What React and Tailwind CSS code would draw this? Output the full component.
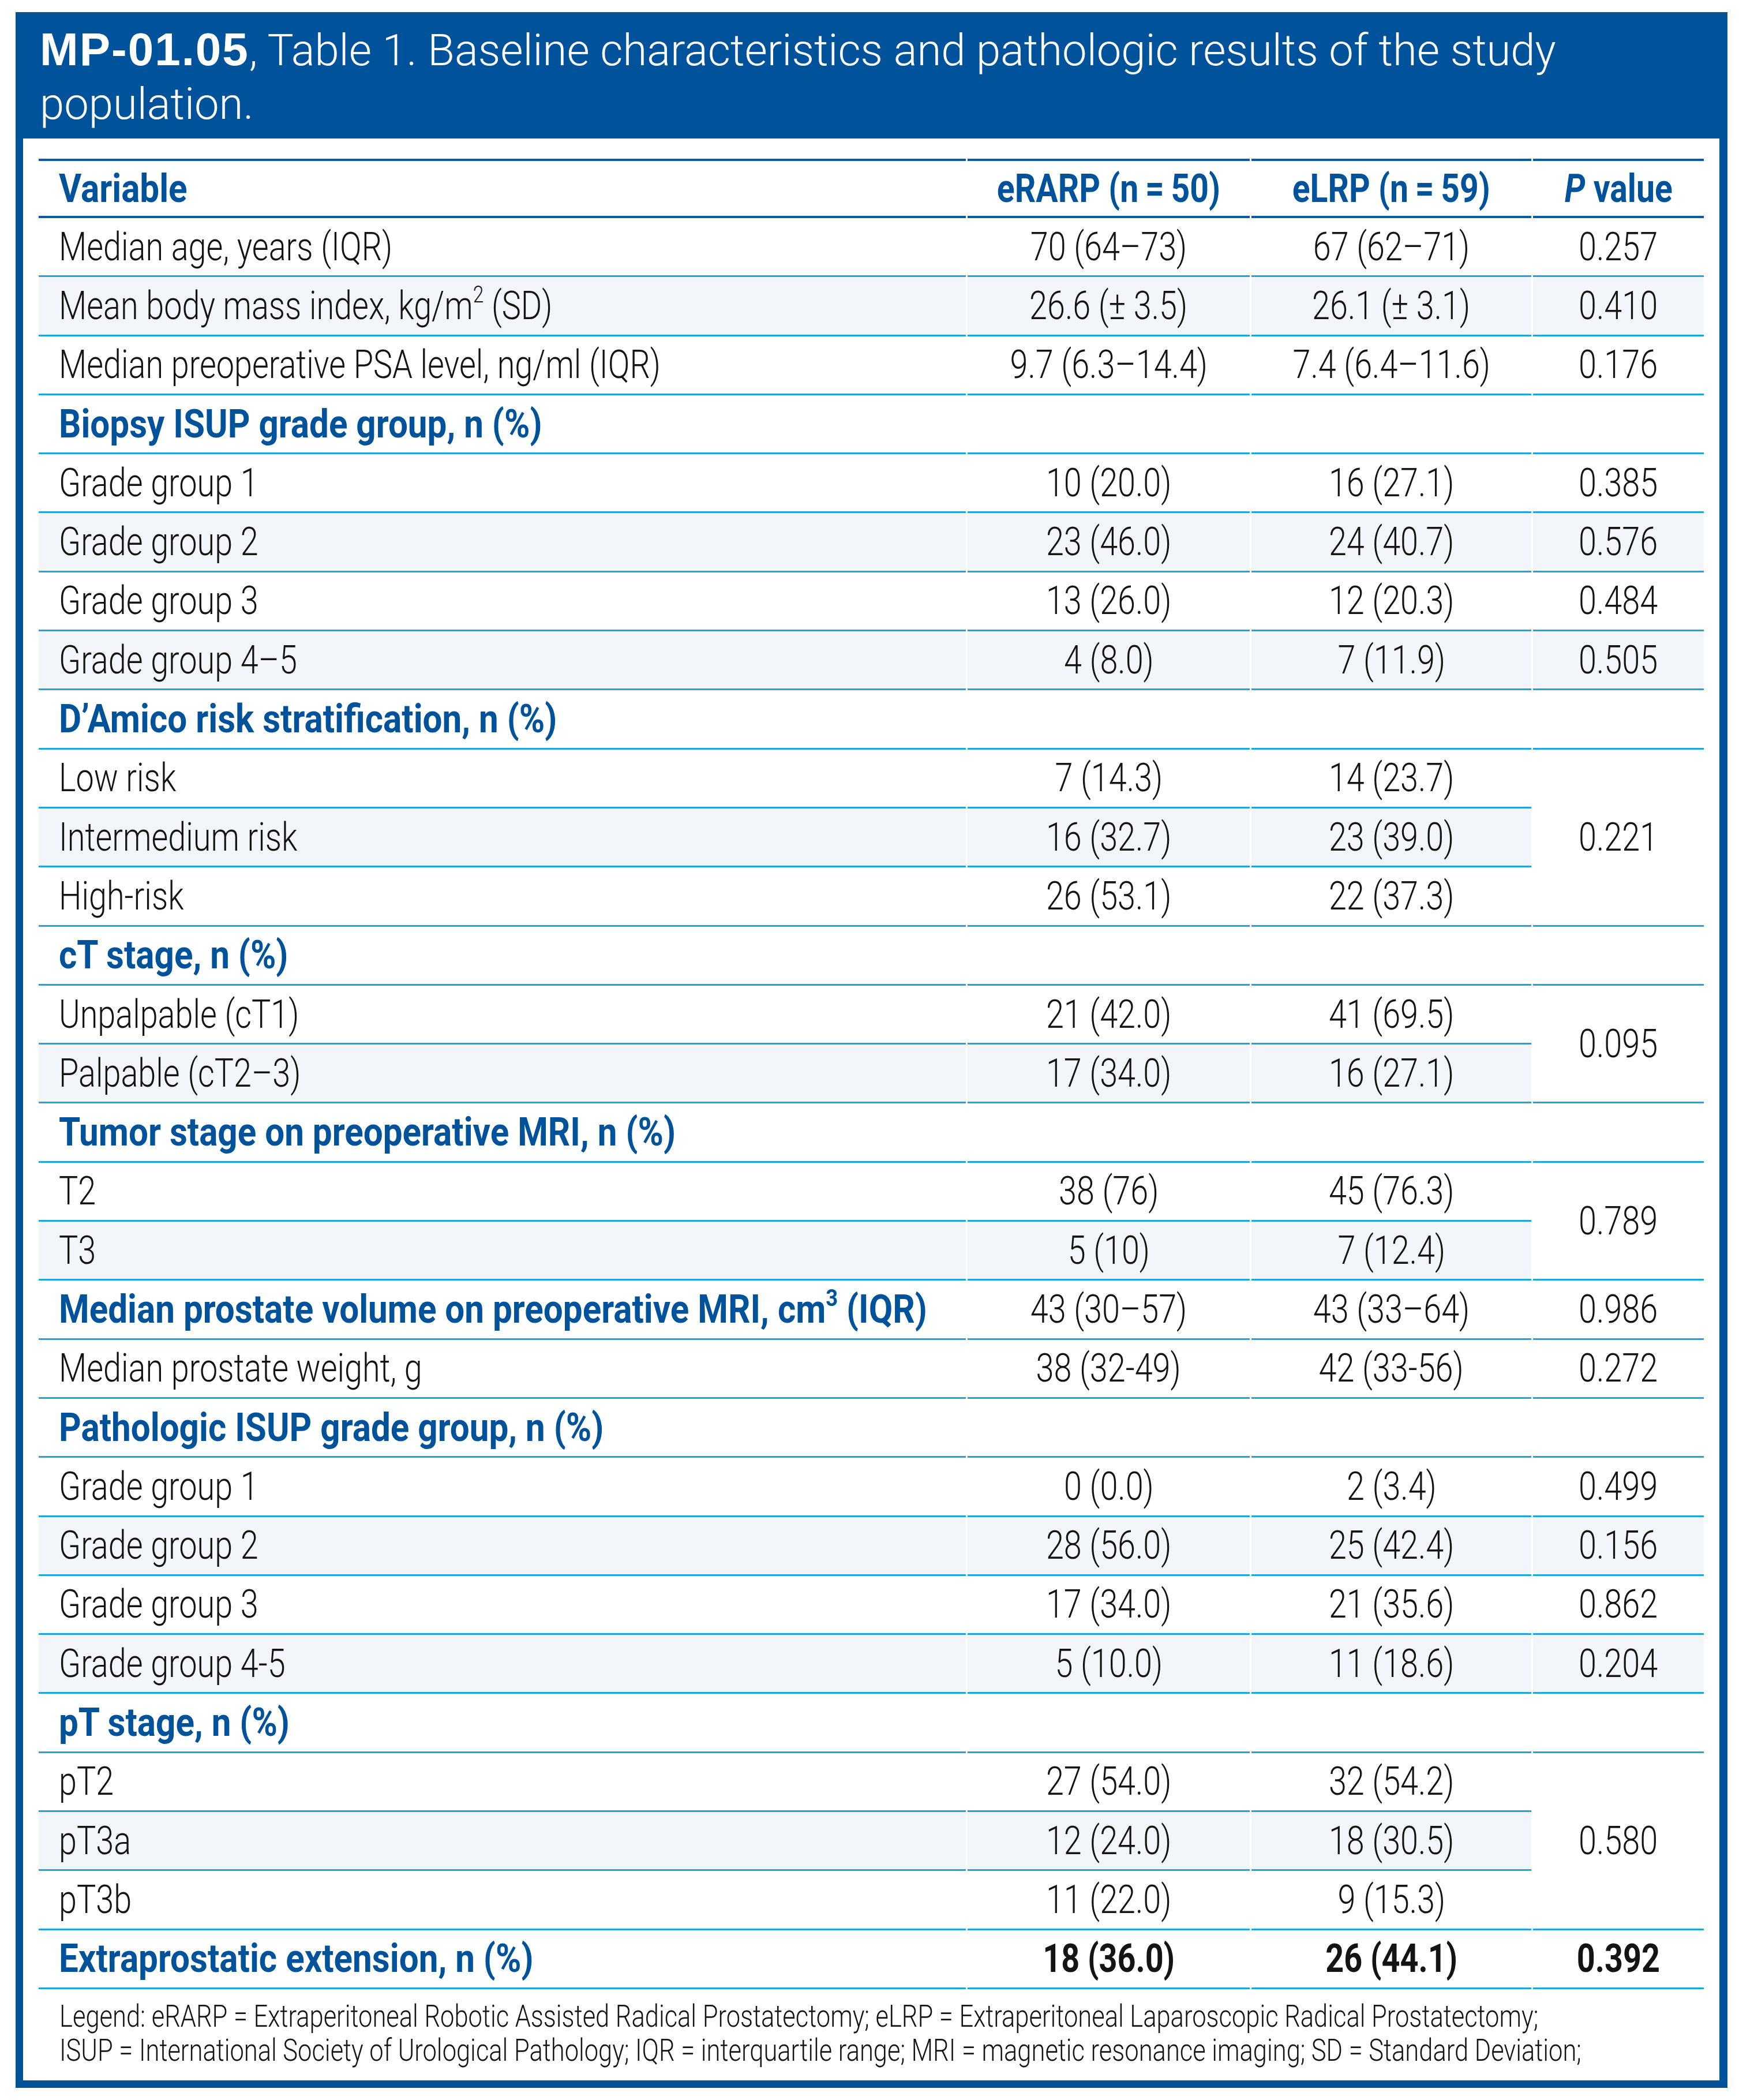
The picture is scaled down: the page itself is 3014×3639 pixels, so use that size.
import React from 'react'

// condensed look: Roboto squeezed horizontally (no condensed face installed)
const T = ({ children, left, s = 'r' }) => {
  const scale = {
    r: 'scale-x-[0.82]',
    b: 'scale-x-[0.885]',
    h: 'scale-x-[0.84]',
  }[s]
  return (
    <span className={`inline-block whitespace-nowrap ${left ? 'origin-left' : 'origin-center'} ${scale}`}>
      {children}
    </span>
  )
}

const rows = [
  { label: 'Median age, years (IQR)', a: '70 (64–73)', b: '67 (62–71)', p: '0.257' },
  { label: <>Mean body mass index, kg/m<sup className="text-[60%] -top-[0.7em]">2</sup> (SD)</>, a: '26.6 (± 3.5)', b: '26.1 (± 3.1)', p: '0.410', shade: true },
  { label: 'Median preoperative PSA level, ng/ml (IQR)', a: '9.7 (6.3–14.4)', b: '7.4 (6.4–11.6)', p: '0.176' },
  { section: 'Biopsy ISUP grade group, n (%)' },
  { label: 'Grade group 1', a: '10 (20.0)', b: '16 (27.1)', p: '0.385' },
  { label: 'Grade group 2', a: '23 (46.0)', b: '24 (40.7)', p: '0.576', shade: true },
  { label: 'Grade group 3', a: '13 (26.0)', b: '12 (20.3)', p: '0.484' },
  { label: 'Grade group 4–5', a: '4 (8.0)', b: '7 (11.9)', p: '0.505', shade: true },
  { section: 'D’Amico risk stratification, n (%)' },
  { label: 'Low risk', a: '7 (14.3)', b: '14 (23.7)', p: '0.221', span: 3 },
  { label: 'Intermedium risk', a: '16 (32.7)', b: '23 (39.0)', shade: true, skip: true },
  { label: 'High-risk', a: '26 (53.1)', b: '22 (37.3)', skip: true },
  { section: 'cT stage, n (%)' },
  { label: 'Unpalpable (cT1)', a: '21 (42.0)', b: '41 (69.5)', p: '0.095', span: 2 },
  { label: 'Palpable (cT2–3)', a: '17 (34.0)', b: '16 (27.1)', shade: true, skip: true },
  { section: 'Tumor stage on preoperative MRI, n (%)' },
  { label: 'T2', a: '38 (76)', b: '45 (76.3)', p: '0.789', span: 2 },
  { label: 'T3', a: '5 (10)', b: '7 (12.4)', shade: true, skip: true },
  { label: <>Median prostate volume on preoperative MRI, cm<sup className="text-[60%] -top-[0.7em]">3</sup> (IQR)</>, blue: true, a: '43 (30–57)', b: '43 (33–64)', p: '0.986' },
  { label: 'Median prostate weight, g', a: '38 (32-49)', b: '42 (33-56)', p: '0.272' },
  { section: 'Pathologic ISUP grade group, n (%)' },
  { label: 'Grade group 1', a: '0 (0.0)', b: '2 (3.4)', p: '0.499' },
  { label: 'Grade group 2', a: '28 (56.0)', b: '25 (42.4)', p: '0.156', shade: true },
  { label: 'Grade group 3', a: '17 (34.0)', b: '21 (35.6)', p: '0.862' },
  { label: 'Grade group 4-5', a: '5 (10.0)', b: '11 (18.6)', p: '0.204', shade: true },
  { section: 'pT stage, n (%)' },
  { label: 'pT2', a: '27 (54.0)', b: '32 (54.2)', p: '0.580', span: 3 },
  { label: 'pT3a', a: '12 (24.0)', b: '18 (30.5)', shade: true, skip: true },
  { label: 'pT3b', a: '11 (22.0)', b: '9 (15.3)', skip: true },
  { label: 'Extraprostatic extension, n (%)', blue: true, bold: true, a: '18 (36.0)', b: '26 (44.1)', p: '0.392' },
]

const cell = 'h-[102.3px] p-0 align-middle border-b-[3px] border-[#1ba6df]'
const head = 'h-[103px] p-0 align-middle border-y-[4px] border-[#0b5aa6]'

export default function App() {
  return (
    <div className="w-[3014px] h-[3639px] overflow-hidden bg-white pl-[27px] pt-[21px] font-['Roboto',sans-serif]">
      <div className="w-[2967px] border-l-[13px] border-r-[14px] border-b-[13px] border-[#00539b]">
        {/* title band */}
        <div className="h-[219px] bg-[#00539b] pl-[29px] pt-[18px] text-white text-[76px] leading-[93px] font-light">
          <span className="font-['Liberation_Sans',sans-serif] font-bold text-[80px] tracking-[2px]">MP-01.05</span>
          <span>, Table 1. Baseline characteristics and pathologic results of the study</span>
          <br />
          <span>population.</span>
        </div>

        <div className="bg-white pt-[35px] pl-[24px] pb-[22px]">
          <table className="table-fixed w-[2892px] border-separate border-spacing-x-[3px] border-spacing-y-0 text-[68px] leading-none text-[#141414]">
            <colgroup>
              <col className="w-[1607px]" />
              <col className="w-[489px]" />
              <col className="w-[485px]" />
              <col className="w-[296px]" />
            </colgroup>
            <thead>
              <tr className="text-[#00539b] font-bold">
                <th className={`${head} pl-[35px] text-left`}><T left s="b">Variable</T></th>
                <th className={`${head} text-center`}><T s="h">eRARP (n{'\u2009'}={'\u2009'}50)</T></th>
                <th className={`${head} text-center`}><T s="h">eLRP (n{'\u2009'}={'\u2009'}59)</T></th>
                <th className={`${head} text-center`}><T s="h"><i>P</i> value</T></th>
              </tr>
            </thead>
            <tbody className="font-light">
              {rows.map((r, i) =>
                r.section ? (
                  <tr key={i}>
                    <td className={`${cell} pl-[35px] text-[#00539b] font-bold`}><T left s="b">{r.section}</T></td>
                    <td className={cell}></td>
                    <td className={cell}></td>
                    <td className={cell}></td>
                  </tr>
                ) : (
                  <tr key={i} className={r.bold ? 'font-bold' : ''}>
                    <td className={`${cell} pl-[35px] ${r.shade ? 'bg-[#f2f6fb]' : ''} ${r.blue ? 'text-[#00539b] font-bold' : ''}`}>
                      <T left s={r.blue ? 'b' : 'r'}>{r.label}</T>
                    </td>
                    <td className={`${cell} text-center ${r.shade ? 'bg-[#f2f6fb]' : ''}`}><T>{r.a}</T></td>
                    <td className={`${cell} text-center ${r.shade ? 'bg-[#f2f6fb]' : ''}`}><T>{r.b}</T></td>
                    {!r.skip && (
                      <td rowSpan={r.span || 1} className={`${cell} text-center ${r.shade && !r.span ? 'bg-[#f2f6fb]' : ''}`}>
                        <T>{r.p}</T>
                      </td>
                    )}
                  </tr>
                )
              )}
            </tbody>
          </table>

          <div className="mt-[18px] pl-[39px] text-[53px] leading-[59px] font-light text-[#141414]">
            <p><span className="inline-block whitespace-nowrap origin-left scale-x-[0.82]">Legend: eRARP = Extraperitoneal Robotic Assisted Radical Prostatectomy; eLRP = Extraperitoneal Laparoscopic Radical Prostatectomy;</span></p>
            <p><span className="inline-block whitespace-nowrap origin-left scale-x-[0.82]">ISUP = International Society of Urological Pathology; IQR = interquartile range; MRI = magnetic resonance imaging; SD = Standard Deviation;</span></p>
          </div>
        </div>
      </div>
    </div>
  )
}
